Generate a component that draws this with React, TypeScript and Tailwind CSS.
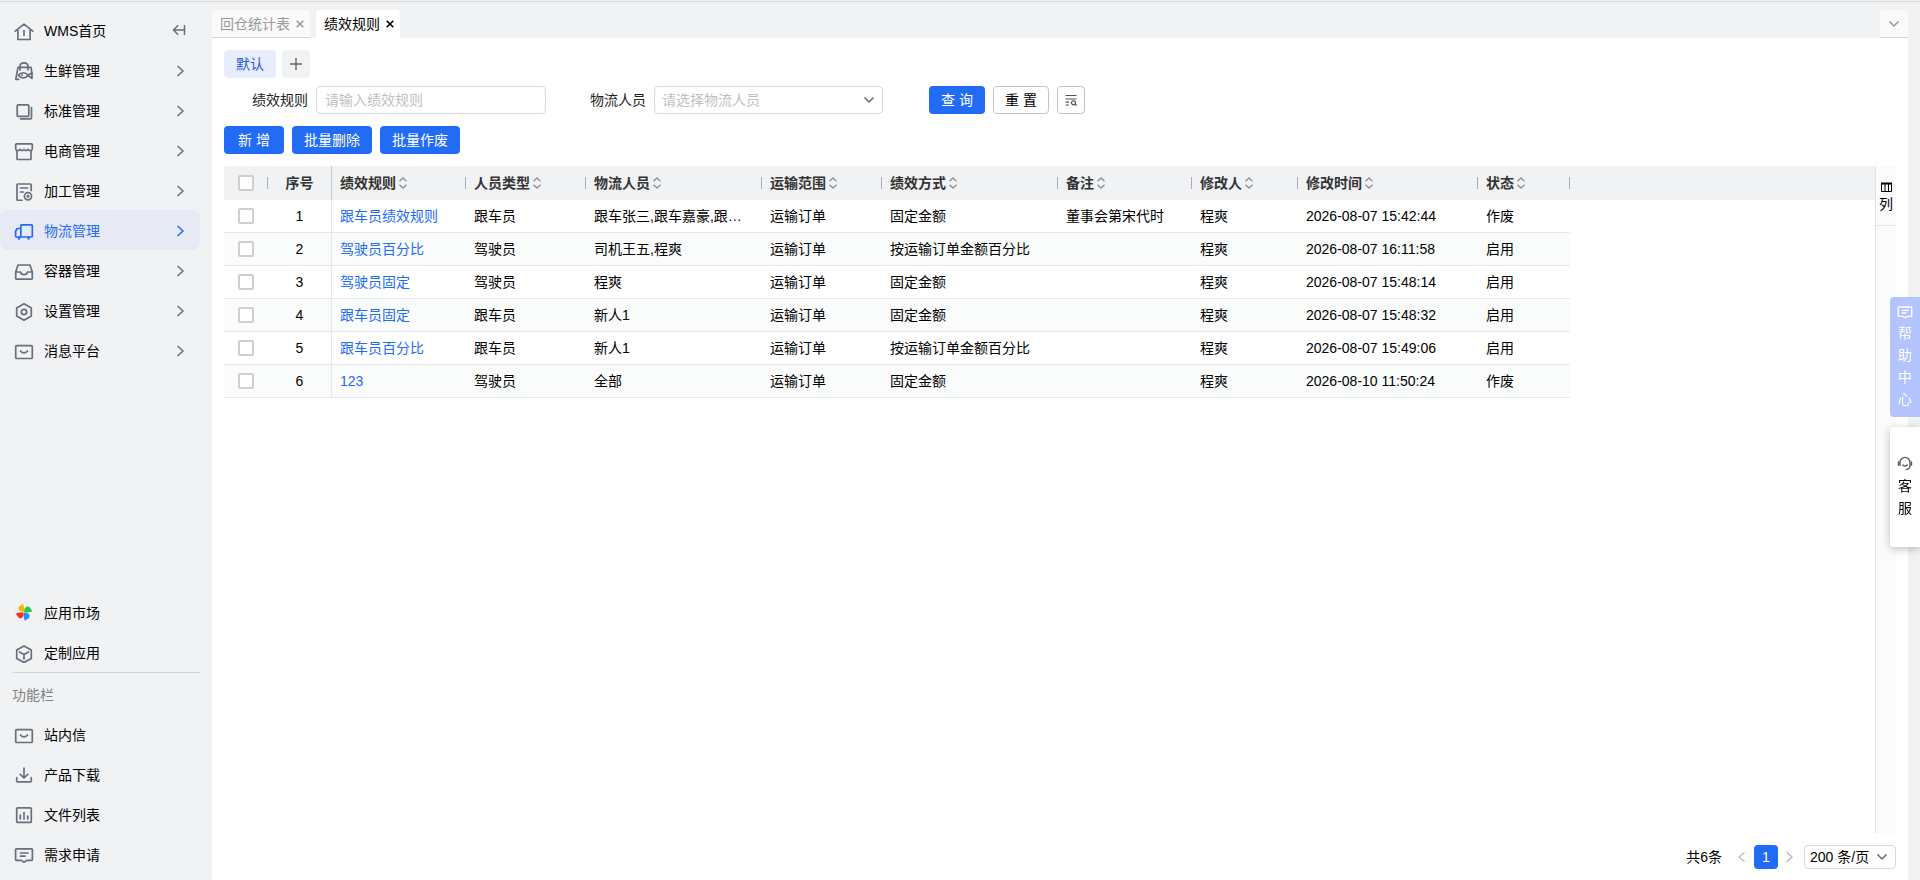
import { useState } from 'react'
import type { ReactNode } from 'react'
import clsx from 'clsx'

const icons: Record<string, ReactNode> = {
  home: <path d="M1.2 10.2 10 3.2l8.8 7M3.9 8.6v9.9h12.2V8.6M10 9.5v4.8" />,
  fresh: (
    <>
      <path d="M6 9V5.5C6 3 7.600 1.800 10 1.800s4 1.200 4 3.700V9M17.800 11.500l-.8-5.200H4L1.800 18.300h3" />
      <path d="M4.500 14.300c2.200-3.400 7-3.400 9.500 0l4-2.600v5.600l-4-2.700c-2.500 3.200-7.300 3.200-9.500-.3z" />
      <circle cx="8" cy="14.200" r=".3" />
    </>
  ),
  standard: (
    <>
      <rect x="3.200" y="3.800" width="11.600" height="11.600" rx="1" />
      <path d="M17.500 6.500v10.300a1 1 0 0 1-1 1H6.500" />
    </>
  ),
  shop: (
    <>
      <path d="M3 9.500a2 2 0 0 1-1.300-2V3.700a.8.8 0 0 1 .8-.8h15a.8.8 0 0 1 .8.800v3.800a2 2 0 0 1-1.300 2M6 8.500c1.200 1.400 2.800 1.400 4 0 1.200 1.400 2.800 1.400 4 0" />
      <path d="M3 9.500v8.200a.8.8 0 0 0 .8.800h12.400a.8.8 0 0 0 .8-.8V9.500M3 9.500c1.300.3 2.300 0 3-1M17 9.500c-1.300.3-2.300 0-3-1" />
    </>
  ),
  process: (
    <>
      <path d="M17.200 9.500V3.800a.8.8 0 0 0-.8-.8H3.800a.8.8 0 0 0-.8.800v14.700a.8.8 0 0 0 .8.800H8M6.500 7h7M6.500 11h3" />
      <circle cx="14" cy="15.300" r="3.600" />
      <circle cx="14" cy="15.300" r=".7" />
    </>
  ),
  truck: (
    <>
      <path d="M6.800 16V4.600a.8.8 0 0 1 .8-.8h9.900a.8.8 0 0 1 .8.800v10.600a.8.8 0 0 1-.8.800H2.400a.8.8 0 0 1-.8-.8v-5L3.200 7.500h3.600" />
      <path strokeWidth="2.400" d="M5 16.500v1M14.500 16.500v1" />
    </>
  ),
  box: (
    <>
      <path d="M4 4h12l2.300 7v6.400a.8.8 0 0 1-.8.800h-15a.8.8 0 0 1-.8-.8V11z" />
      <path d="M1.800 11h4.700c.5 2 1.800 2.600 3.500 2.600s3-.6 3.500-2.600h4.700" />
    </>
  ),
  setting: (
    <>
      <path d="M10 2.800l7.300 4.100v8.200L10 19.200l-7.300-4.100V6.900z" />
      <circle cx="10" cy="11" r="2.600" />
    </>
  ),
  message: (
    <>
      <rect x="1.700" y="4.700" width="16.600" height="12.800" rx="1" />
      <path d="M6.500 10c1.200 1.300 2.300 1.900 3.500 1.900s2.300-.6 3.500-1.900" />
    </>
  ),
  custom: <path d="M10 2.900l7.300 4.200v8.300L10 19.600l-7.300-4.200V7.100zM5.500 9l4.500 2.600L14.500 9M10 11.600v4.600" />,
  download: <path d="M2.700 12.500v3.300a1 1 0 0 0 1 1h12.600a1 1 0 0 0 1-1v-3.300M10 3v9.800M6.200 9.300l3.800 3.700 3.800-3.700" />,
  files: (
    <>
      <rect x="2.700" y="2.800" width="14.600" height="14.600" rx="1" />
      <path d="M6.300 10v4M10 7.500V14M13.700 11v3" />
    </>
  ),
  comment: (
    <path d="M2.400 3.800h15.200a.8.8 0 0 1 .8.800v10a.8.8 0 0 1-.8.800h-4.800L10 17.200l-2.800-1.800H2.400a.8.8 0 0 1-.8-.8v-10a.8.8 0 0 1 .8-.8zM6.500 8h7.500M6.500 11.200h4.500" />
  ),
  service: (
    <>
      <path d="M3.800 13V9.200a6.200 6.200 0 0 1 12.400 0V13c0 2.800-1.700 4.800-4.700 5.200M7.200 12.600c1.600 1.500 4 1.500 5.600 0" />
      <path strokeWidth="2" d="M2 8.800v3.600M18 8.800v3.600" />
    </>
  ),
}

function Icon({ name, className }: { name: string; className?: string }) {
  return (
    <svg
      viewBox="0 0 20 20"
      className={clsx('shrink-0', className)}
      fill="none"
      stroke="currentColor"
      strokeWidth="1.7"
      strokeLinecap="round"
      strokeLinejoin="round"
    >
      {icons[name]}
    </svg>
  )
}

function Pinwheel() {
  return (
    <svg viewBox="0 0 20 20" className="size-5 shrink-0">
      <path fill="#ffb400" d="M9.700 9.200C5 9 3.200 5 5 3.600 6.200 2.600 7.500 2.400 8.600.5c1.600 2.500 1.900 6 1.100 8.700z" />
      <path fill="#22cc3c" d="M10.200 9.200C9.800 4.700 13 2.600 15.200 4c1.300.8 1.500 2.900 3.300 4.100-2.500 1.400-5.600 1.800-8.300 1.100z" />
      <path fill="#2f8cf5" d="M10.200 9.600c4.700.2 6.400 2.900 5 5.100-.8 1.300-3 1.400-4.200 3.200-1.400-2.300-1.600-5.600-.8-8.300z" />
      <path fill="#fb2c2c" d="M9.700 9.700c.3 4.600-2.500 6.400-4.600 5.200-1.400-.9-1.700-2.900-3.700-4.100 2.400-1.400 5.700-1.600 8.300-1.100z" />
    </svg>
  )
}

function Chevron({ dir, className }: { dir: 'left' | 'right' | 'down'; className?: string }) {
  const d = {
    left: 'M8.500 1.500 3 6l5.500 4.500',
    right: 'M3.500 1 9 6l-5.500 5',
    down: 'M1.500 3.500 6 8l4.500-4.500',
  }[dir]
  return (
    <svg
      viewBox="0 0 12 12"
      className={clsx('size-3 shrink-0', className)}
      fill="none"
      stroke="currentColor"
      strokeWidth="1.5"
    >
      <path d={d} />
    </svg>
  )
}

function Close() {
  return (
    <svg viewBox="0 0 8 8" className="size-2" fill="none" stroke="currentColor" strokeWidth="1.6">
      <path d="M.7.700l6.600 6.600M7.300.700.700 7.300" />
    </svg>
  )
}

function Sorter() {
  return (
    <svg viewBox="0 0 8 12" className="h-3 w-2 shrink-0" fill="none" stroke="#8f9299" strokeWidth="1.4">
      <path d="M.5 4.200 4 .9l3.500 3.300M.5 7.800 4 11.100l3.500-3.300" />
    </svg>
  )
}

const menu = [
  { icon: 'fresh', label: '生鲜管理' },
  { icon: 'standard', label: '标准管理' },
  { icon: 'shop', label: '电商管理' },
  { icon: 'process', label: '加工管理' },
  { icon: 'truck', label: '物流管理' },
  { icon: 'box', label: '容器管理' },
  { icon: 'setting', label: '设置管理' },
  { icon: 'message', label: '消息平台' },
]

const tools = [
  { icon: 'message', label: '站内信' },
  { icon: 'download', label: '产品下载' },
  { icon: 'files', label: '文件列表' },
  { icon: 'comment', label: '需求申请' },
]

const columns = ['绩效规则', '人员类型', '物流人员', '运输范围', '绩效方式', '备注', '修改人', '修改时间', '状态']

const rows = [
  ['跟车员绩效规则', '跟车员', '跟车张三,跟车嘉豪,跟车员', '运输订单', '固定金额', '董事会第宋代时', '程爽', '2026-08-07 15:42:44', '作废'],
  ['驾驶员百分比', '驾驶员', '司机王五,程爽', '运输订单', '按运输订单金额百分比', '', '程爽', '2026-08-07 16:11:58', '启用'],
  ['驾驶员固定', '驾驶员', '程爽', '运输订单', '固定金额', '', '程爽', '2026-08-07 15:48:14', '启用'],
  ['跟车员固定', '跟车员', '新人1', '运输订单', '固定金额', '', '程爽', '2026-08-07 15:48:32', '启用'],
  ['跟车员百分比', '跟车员', '新人1', '运输订单', '按运输订单金额百分比', '', '程爽', '2026-08-07 15:49:06', '启用'],
  ['123', '驾驶员', '全部', '运输订单', '固定金额', '', '程爽', '2026-08-10 11:50:24', '作废'],
]

const primary = 'h-7 rounded-sm bg-[#226bf4] text-white'
const checkbox = 'block mx-auto size-4 appearance-none rounded-xs border-2 border-[#cfcfcf] bg-white checked:bg-[#226bf4]'

function Sidebar() {
  const item = 'flex h-10 w-full items-center gap-2.5 pl-3.5 pr-3.5 pt-0.5 text-left'
  return (
    <aside className="flex w-[212px] shrink-0 flex-col pb-1.5 pr-3 pt-2">
      <div className="flex items-center">
        <a href="#" className={item}>
          <Icon name="home" className="size-5 text-[#6b6d7c]" />
          WMS首页
        </a>
        <button aria-label="收起菜单" className="mr-3.5 shrink-0 text-[#6b6d7c]">
          <svg viewBox="0 0 14 12" className="h-3 w-3.5" fill="none" stroke="currentColor" strokeWidth="1.5">
            <path d="M12.500 1v10M12 6H1.500M6.200 1.300 1.500 6l4.700 4.700" />
          </svg>
        </button>
      </div>
      <nav>
        {menu.map((m) => {
          const active = m.label === '物流管理'
          return (
            <button key={m.label} className={clsx(item, 'rounded-lg', active && 'bg-[#e7eaf5] text-[#226bf4]')}>
              <Icon name={m.icon} className={clsx('size-5', !active && 'text-[#6b6d7c]')} />
              <span className="grow">{m.label}</span>
              <Chevron dir="right" className={active ? '' : 'text-[#6b6d7c]'} />
            </button>
          )
        })}
      </nav>
      <div className="mt-auto">
        <a href="#" className={item}>
          <Pinwheel />
          应用市场
        </a>
        <a href="#" className={item}>
          <Icon name="custom" className="size-5 text-[#6b6d7c]" />
          定制应用
        </a>
        <h2 className="ml-3 flex h-[42px] items-center border-t border-[#d5d6d9] pt-0.5 text-[#808285]">功能栏</h2>
        {tools.map((t) => (
          <a key={t.label} href="#" className={item}>
            <Icon name={t.icon} className="size-5 text-[#6b6d7c]" />
            {t.label}
          </a>
        ))}
      </div>
    </aside>
  )
}

function Filters() {
  return (
    <form className="mt-2 flex items-center" onSubmit={(e) => e.preventDefault()}>
      <label htmlFor="rule" className="w-[92px] shrink-0 pr-2 text-right text-[#222]">
        绩效规则
      </label>
      <input
        id="rule"
        placeholder="请输入绩效规则"
        className="h-7 w-[230px] rounded-sm border border-[#d9d9d9] bg-white px-2 placeholder:text-[#bfbfbf]"
      />
      <label htmlFor="staff" className="w-[108px] shrink-0 pr-2 text-right text-[#222]">
        物流人员
      </label>
      <div className="relative">
        <select
          id="staff"
          className="block h-7 w-[229px] appearance-none rounded-sm border border-[#d9d9d9] bg-white px-[7px] text-[#bfbfbf]"
        >
          <option>请选择物流人员</option>
        </select>
        <Chevron dir="down" className="pointer-events-none absolute right-2 top-2 text-[#666]" />
      </div>
      <div className="ml-[46px] flex gap-2">
        <button className={clsx(primary, 'w-14')}>查 询</button>
        <button type="reset" className="h-7 w-14 rounded-sm border border-[#c4c4c4] bg-white">
          重 置
        </button>
        <button
          type="button"
          aria-label="筛选设置"
          className="flex size-7 items-center justify-center rounded-sm border border-[#c4c4c4] bg-white text-[#555]"
        >
          <svg viewBox="0 0 12 12" className="size-3" fill="none" stroke="currentColor" strokeWidth="1.2">
            <path d="M.5 1.500h11M.5 5h11M.5 8.200h3.500M.5 11h3.500M10.300 10.200l1.400 1.300" />
            <circle cx="8.500" cy="8.800" r="2" />
          </svg>
        </button>
      </div>
    </form>
  )
}

function RuleTable() {
  return (
    <table className="w-full table-fixed border-separate border-spacing-0 text-left">
      <colgroup>
        <col className="w-11" />
        <col className="w-16" />
        <col className="w-[134px]" />
        <col className="w-[120px]" />
        <col className="w-44" />
        <col className="w-[120px]" />
        <col className="w-44" />
        <col className="w-[134px]" />
        <col className="w-[106px]" />
        <col className="w-[180px]" />
        <col className="w-[92px]" />
        <col />
      </colgroup>
      <thead className="bg-[#f1f2f4] text-[#333]">
        <tr className="h-[34px]">
          <th className="p-0">
            <div className="flex items-center">
              <input type="checkbox" aria-label="全选" className={checkbox} />
              <span className="-ml-px h-3 w-px bg-[#a9abb6]" />
            </div>
          </th>
          <th className="border-r border-[#c6c8cc] p-0 text-center font-bold">序号</th>
          {columns.map((c) => (
            <th key={c} className="p-0 pl-2 font-bold">
              <div className="flex items-center gap-[3px]">
                {c}
                <Sorter />
                <span className="ml-auto h-3 w-px bg-[#a9abb6]" />
              </div>
            </th>
          ))}
          <th className="p-0" />
        </tr>
      </thead>
      <tbody>
        {rows.map((row, i) => {
          const cell = clsx('border-b border-[#e6e7e8] p-0', i % 2 === 1 && 'bg-[#fafcfb]')
          return (
            <tr key={row[0]} className="h-[33px]">
              <td className={cell}>
                <input type="checkbox" aria-label={'选择 ' + row[0]} className={checkbox} />
              </td>
              <td className={clsx(cell, 'border-r text-center')}>{i + 1}</td>
              {row.map((value, j) => (
                <td key={j} className={clsx(cell, 'truncate pl-2', j === 2 ? 'pr-5' : 'pr-1')}>
                  {j === 0 ? (
                    <a href="#" className="text-[#226bf4]">
                      {value}
                    </a>
                  ) : (
                    value
                  )}
                </td>
              ))}
              <td className="p-0" />
            </tr>
          )
        })}
      </tbody>
    </table>
  )
}

function Pagination() {
  return (
    <footer className="flex items-center justify-end pb-[11px] pr-3 pt-3">
      <span>共6条</span>
      <button aria-label="上一页" className="flex w-8 justify-center pl-2 text-[#bfbfbf]">
        <Chevron dir="left" />
      </button>
      <button aria-current="page" className="size-6 rounded-sm bg-[#226bf4] text-white">
        1
      </button>
      <button aria-label="下一页" className="flex w-[26px] justify-center pr-1 text-[#bfbfbf]">
        <Chevron dir="right" />
      </button>
      <div className="relative">
        <select
          aria-label="每页条数"
          className="block h-6 w-[92px] appearance-none rounded-sm border border-[#d9d9d9] bg-white px-[5px]"
        >
          <option>200 条/页</option>
          <option>100 条/页</option>
        </select>
        <Chevron dir="down" className="pointer-events-none absolute right-2 top-1.5 text-[#666]" />
      </div>
    </footer>
  )
}

export default function App() {
  const [tab, setTab] = useState('绩效规则')

  return (
    <div className="bg-[#f1f2f4] pt-px font-['Liberation_Sans','Noto_Sans_CJK_SC',sans-serif] text-sm text-black">
      <div className="flex min-h-[calc(100vh-1px)] border-t border-[#d8dadc]">
        <Sidebar />
        <div className="flex min-w-0 grow flex-col pr-3 pt-2">
          <header className="flex h-7 gap-1.5">
            {['回仓统计表', '绩效规则'].map((t) => (
              <button
                key={t}
                onClick={() => setTab(t)}
                className={clsx(
                  'flex items-center gap-1.5 rounded-t pl-2 pr-1.5',
                  t === tab ? 'bg-white' : 'border-b border-[#d5d6d9] bg-[#fafafa] text-[#999]'
                )}
              >
                {t}
                <Close />
              </button>
            ))}
            <button
              aria-label="更多标签"
              className="ml-auto flex w-7 items-center justify-center rounded-t border-b border-[#d5d6d9] bg-[#fafafa] text-[#999]"
            >
              <Chevron dir="down" />
            </button>
          </header>
          <main className="flex grow flex-col bg-white pl-3 pt-3">
            <div className="flex gap-1.5">
              <button className="h-7 w-[52px] rounded-sm bg-[#e8edfc] text-[#2459e0]">默认</button>
              <button
                aria-label="新增方案"
                className="flex size-7 items-center justify-center rounded-sm bg-[#f1f2f4] text-[#666]"
              >
                <svg viewBox="0 0 12 12" className="size-3" fill="none" stroke="currentColor" strokeWidth="1.4">
                  <path d="M6 0v12M0 6h12" />
                </svg>
              </button>
            </div>
            <Filters />
            <div className="mt-3 flex gap-2">
              <button className={clsx(primary, 'w-15')}>新 增</button>
              <button className={clsx(primary, 'w-20')}>批量删除</button>
              <button className={clsx(primary, 'w-20')}>批量作废</button>
            </div>
            <div className="mt-3 flex grow pr-3">
              <div className="min-w-0 grow">
                <RuleTable />
              </div>
              <div className="w-[21px] shrink-0 border-l border-[#e2e3e5] bg-[#fafbfd]">
                <button className="flex h-15 w-full flex-col items-center gap-0.5 border-b border-[#e6e7e8] pt-4">
                  <svg viewBox="0 0 11 10" className="h-2.5 w-[11px]" fill="none" stroke="currentColor">
                    <path strokeWidth="2" d="M0 1.500h11" />
                    <path d="M.5 1v8.500h10V1M4 1v8.500M7.500 1v8.500" />
                  </svg>
                  列
                </button>
              </div>
            </div>
            <Pagination />
          </main>
        </div>
      </div>
      <div className="fixed right-0 top-[297px] flex w-[30px] flex-col gap-2.5">
        <button className="flex h-[120px] flex-col items-center gap-0.5 rounded-l bg-[#b3c4ff] px-2 pt-[7px] leading-[22px] text-white">
          <Icon name="comment" className="size-4" />
          <span>帮助中心</span>
        </button>
        <button className="flex h-[120px] flex-col items-center justify-center gap-1 rounded-l bg-white px-2 leading-[22px] shadow-[0_2px_8px_rgba(0,0,0,0.25)]">
          <Icon name="service" className="size-4 text-[#55576a]" />
          <span>客服</span>
        </button>
      </div>
    </div>
  )
}
